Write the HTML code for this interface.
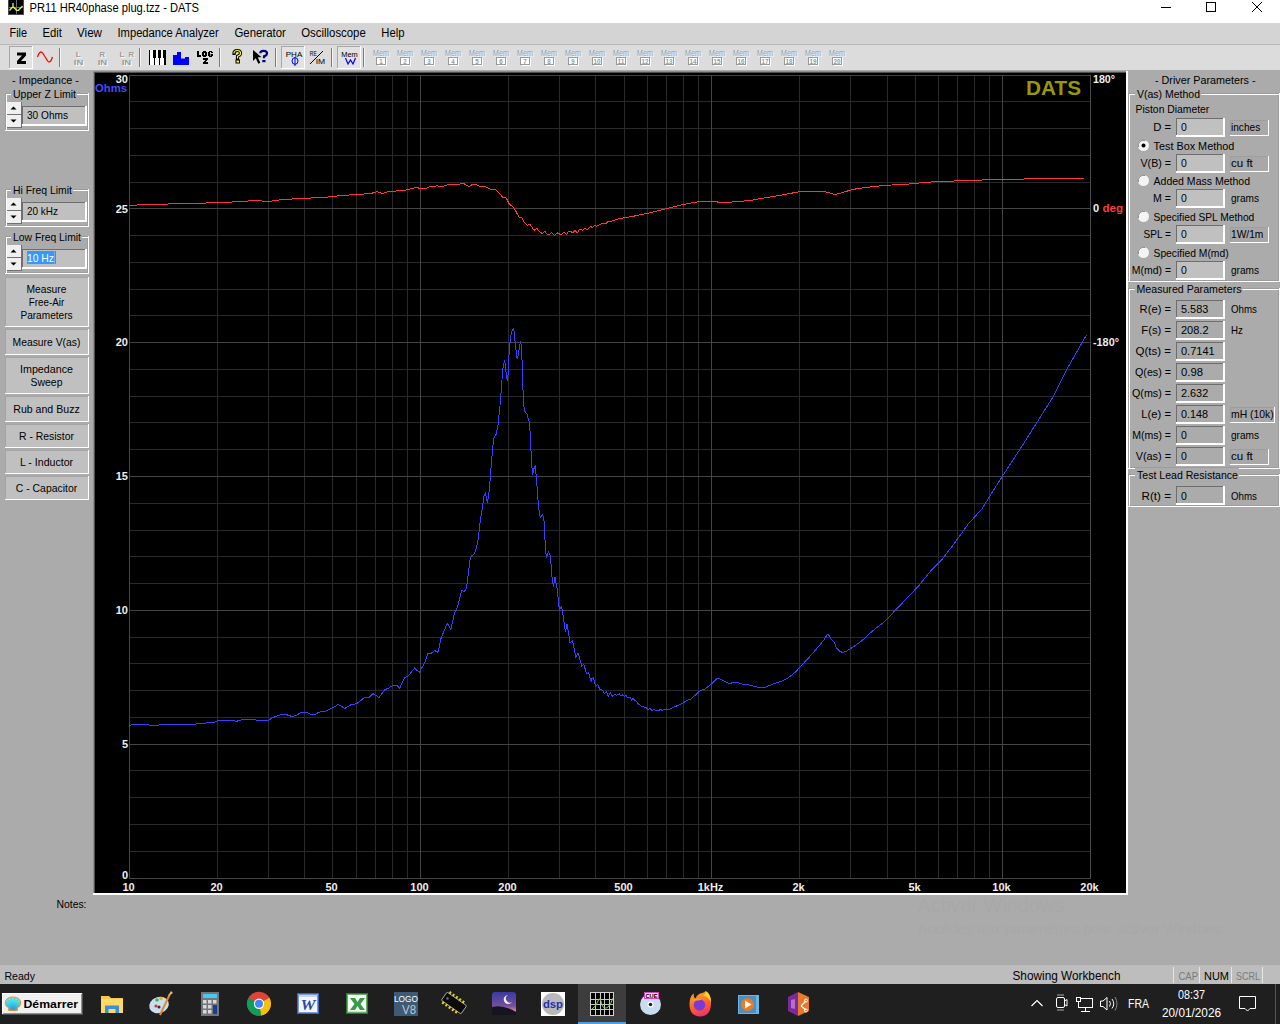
<!DOCTYPE html>
<html><head><meta charset="utf-8"><title>DATS</title>
<style>
html,body{margin:0;padding:0;width:1280px;height:1024px;overflow:hidden;background:#ababab;}
svg{display:block;font-family:"Liberation Sans",sans-serif;}
</style></head><body>
<svg width="1280" height="1024" viewBox="0 0 1280 1024">
<rect x="0" y="0" width="1280" height="1024" fill="#ababab" />
<rect x="0" y="0" width="1280" height="23" fill="#ffffff" />
<rect x="8" y="0" width="16" height="15" fill="#4a4a4a" />
<rect x="9" y="0" width="14" height="14" fill="#000" />
<rect x="16" y="0" width="1" height="14" fill="#707070" />
<rect x="9" y="7" width="14" height="1" fill="#6a6a6a" />
<path d="M9.5 10.5 L12 7.5 L13 7.5 L13 3 M13 7.5 L14 7.5 L16.5 10.3 L18.5 10.3 L22.5 6" stroke="#e0f040" stroke-width="1.3" fill="none"/>
<text x="29.5" y="12" font-size="12" fill="#000" text-anchor="start" textLength="169.5" lengthAdjust="spacingAndGlyphs" >PR11 HR40phase plug.tzz - DATS</text>
<rect x="1161" y="7" width="10" height="1" fill="#000" />
<rect x="1206.5" y="2.5" width="9" height="9" fill="none" stroke="#000" stroke-width="1"/>
<path d="M1252 2 L1262 12 M1262 2 L1252 12" stroke="#000" stroke-width="1"/>
<rect x="0" y="23" width="1280" height="21" fill="#d4d4d4" />
<text x="9.5" y="37" font-size="12" fill="#000" text-anchor="start" textLength="17.5" lengthAdjust="spacingAndGlyphs" >File</text>
<text x="42.5" y="37" font-size="12" fill="#000" text-anchor="start" textLength="19.5" lengthAdjust="spacingAndGlyphs" >Edit</text>
<text x="77" y="37" font-size="12" fill="#000" text-anchor="start" textLength="25" lengthAdjust="spacingAndGlyphs" >View</text>
<text x="117.5" y="37" font-size="12" fill="#000" text-anchor="start" textLength="101.25" lengthAdjust="spacingAndGlyphs" >Impedance Analyzer</text>
<text x="234.5" y="37" font-size="12" fill="#000" text-anchor="start" textLength="51.25" lengthAdjust="spacingAndGlyphs" >Generator</text>
<text x="301.25" y="37" font-size="12" fill="#000" text-anchor="start" textLength="64.5" lengthAdjust="spacingAndGlyphs" >Oscilloscope</text>
<text x="381.25" y="37" font-size="12" fill="#000" text-anchor="start" textLength="23.25" lengthAdjust="spacingAndGlyphs" >Help</text>
<rect x="0" y="44" width="1280" height="1" fill="#b8b8b8" />
<rect x="0" y="45" width="1280" height="25" fill="#dcdcdc" />
<rect x="9" y="46" width="24" height="23" fill="#ffffff" />
<rect x="9" y="46" width="23" height="22" fill="#a8a8a8" />
<rect x="10" y="47" width="22" height="21" fill="#e2e2e2" />
<path d="M17 52.5 H26 V55.5 L21 61 H26 V64 H17 V61 L22 55.5 H17Z" fill="#000"/>
<path d="M37.5 57 C39 52, 41 50.5, 43 53.5 L47 60 C49 63.5, 51 62, 52.5 57" stroke="#ff0000" stroke-width="1.3" fill="none"/>
<rect x="59" y="48" width="1" height="19" fill="#7a7a7a" />
<rect x="60" y="48" width="1" height="19" fill="#f4f4f4" />
<text x="79.2" y="58" font-size="8" fill="#ffffff" font-weight="bold" text-anchor="middle" textLength="5" lengthAdjust="spacingAndGlyphs" >L</text>
<text x="78.2" y="57" font-size="8" fill="#9a9a9a" font-weight="bold" text-anchor="middle" textLength="5" lengthAdjust="spacingAndGlyphs" >L</text>
<text x="79.5" y="66" font-size="8" fill="#ffffff" font-weight="bold" text-anchor="middle" textLength="9.5" lengthAdjust="spacingAndGlyphs" >IN</text>
<text x="78.5" y="65" font-size="8" fill="#9a9a9a" font-weight="bold" text-anchor="middle" textLength="9.5" lengthAdjust="spacingAndGlyphs" >IN</text>
<text x="103.3" y="58" font-size="8" fill="#ffffff" font-weight="bold" text-anchor="middle" textLength="5.5" lengthAdjust="spacingAndGlyphs" >R</text>
<text x="102.3" y="57" font-size="8" fill="#9a9a9a" font-weight="bold" text-anchor="middle" textLength="5.5" lengthAdjust="spacingAndGlyphs" >R</text>
<text x="103.4" y="66" font-size="8" fill="#ffffff" font-weight="bold" text-anchor="middle" textLength="9.5" lengthAdjust="spacingAndGlyphs" >IN</text>
<text x="102.4" y="65" font-size="8" fill="#9a9a9a" font-weight="bold" text-anchor="middle" textLength="9.5" lengthAdjust="spacingAndGlyphs" >IN</text>
<text x="123" y="58" font-size="8" fill="#ffffff" font-weight="bold" text-anchor="middle" textLength="5" lengthAdjust="spacingAndGlyphs" >L</text>
<text x="122" y="57" font-size="8" fill="#9a9a9a" font-weight="bold" text-anchor="middle" textLength="5" lengthAdjust="spacingAndGlyphs" >L</text>
<text x="132.2" y="58" font-size="8" fill="#ffffff" font-weight="bold" text-anchor="middle" textLength="5.5" lengthAdjust="spacingAndGlyphs" >R</text>
<text x="131.2" y="57" font-size="8" fill="#9a9a9a" font-weight="bold" text-anchor="middle" textLength="5.5" lengthAdjust="spacingAndGlyphs" >R</text>
<text x="127.4" y="66" font-size="8" fill="#ffffff" font-weight="bold" text-anchor="middle" textLength="9.5" lengthAdjust="spacingAndGlyphs" >IN</text>
<text x="126.4" y="65" font-size="8" fill="#9a9a9a" font-weight="bold" text-anchor="middle" textLength="9.5" lengthAdjust="spacingAndGlyphs" >IN</text>
<rect x="139" y="48" width="1" height="19" fill="#7a7a7a" />
<rect x="140" y="48" width="1" height="19" fill="#f4f4f4" />
<rect x="149" y="50" width="17" height="15" fill="#ffffff" />
<rect x="149" y="50" width="1" height="15" fill="#000" />
<rect x="153" y="50" width="3" height="8" fill="#000" />
<rect x="154" y="58" width="1" height="7" fill="#000" />
<rect x="158" y="50" width="3" height="8" fill="#000" />
<rect x="159" y="58" width="1" height="7" fill="#000" />
<rect x="163" y="50" width="3" height="8" fill="#000" />
<rect x="164" y="58" width="1" height="7" fill="#000" />
<rect x="165" y="50" width="1" height="15" fill="#000" />
<path d="M173 55 H177 V52 H181 V58.5 H185 V57 H189 V65 H173Z" fill="#0000ff"/>
<rect x="197" y="51" width="2" height="6" fill="#000" />
<rect x="197" y="55" width="4" height="2" fill="#000" />
<rect x="203" y="51" width="3" height="6" fill="#000" />
<rect x="202" y="52" width="5" height="4" fill="#000" />
<rect x="204" y="53" width="1" height="2" fill="#dcdcdc" />
<rect x="209" y="51" width="3" height="1" fill="#000" />
<rect x="208" y="52" width="2" height="4" fill="#000" />
<rect x="209" y="56" width="3" height="1" fill="#000" />
<rect x="211" y="52" width="2" height="1" fill="#000" />
<rect x="210.5" y="54" width="2.5" height="2" fill="#000" />
<rect x="203" y="58" width="5" height="2" fill="#000" />
<rect x="205" y="60" width="2" height="1" fill="#000" />
<rect x="204" y="61" width="2" height="1" fill="#000" />
<rect x="203" y="62" width="5" height="2" fill="#000" />
<rect x="219" y="48" width="1" height="19" fill="#7a7a7a" />
<rect x="220" y="48" width="1" height="19" fill="#f4f4f4" />
<path d="M234 53.5 Q234 50.5 237.2 50.5 Q240.5 50.5 240.5 53.2 Q240.5 55.3 237.5 56.3 V58.5" stroke="#000" stroke-width="3.2" fill="none" stroke-linecap="square"/>
<rect x="235.5" y="59.5" width="4.5" height="4" fill="#000" />
<path d="M234 53.5 Q234 50.5 237.2 50.5 Q240.5 50.5 240.5 53.2 Q240.5 55.3 237.5 56.3 V58.5" stroke="#ffff00" stroke-width="1.2" fill="none"/>
<rect x="236.5" y="60.5" width="2.5" height="2" fill="#ffff00" />
<path d="M253 50 L253 61 L255.8 58.3 L258.3 63.8 L260.3 62.8 L257.8 57.3 L261.5 57.3 Z" fill="#000"/>
<path d="M260.3 53.2 Q260.3 50.8 263.5 50.8 Q267 50.8 267 53.2 Q267 55.3 264 56.3 V58.2" stroke="#000080" stroke-width="2.2" fill="none"/>
<rect x="262.3" y="60" width="3.2" height="2.2" fill="#000080" />
<rect x="275" y="48" width="1" height="19" fill="#7a7a7a" />
<rect x="276" y="48" width="1" height="19" fill="#f4f4f4" />
<rect x="281" y="46" width="24" height="23" fill="#ffffff" />
<rect x="281" y="46" width="23" height="22" fill="#a8a8a8" />
<rect x="282" y="47" width="22" height="21" fill="#e2e2e2" />
<text x="294" y="56.5" font-size="8" fill="#000" text-anchor="middle" textLength="16.5" lengthAdjust="spacingAndGlyphs" >PHA</text>
<ellipse cx="295" cy="61" rx="3" ry="3.3" fill="none" stroke="#0000ff" stroke-width="1"/>
<rect x="294.5" y="57" width="1" height="9" fill="#0000ff" />
<text x="313.3" y="56.3" font-size="7.5" fill="#000" text-anchor="middle" textLength="7" lengthAdjust="spacingAndGlyphs" >RE</text>
<text x="320.5" y="63.5" font-size="7.5" fill="#000" text-anchor="middle" textLength="9.5" lengthAdjust="spacingAndGlyphs" >IM</text>
<path d="M310 64 L323 51" stroke="#000" stroke-width="1"/>
<rect x="331" y="48" width="1" height="19" fill="#7a7a7a" />
<rect x="332" y="48" width="1" height="19" fill="#f4f4f4" />
<rect x="337" y="46" width="24" height="23" fill="#ffffff" />
<rect x="337" y="46" width="23" height="22" fill="#a8a8a8" />
<rect x="338" y="47" width="22" height="21" fill="#e2e2e2" />
<text x="349.5" y="56.5" font-size="8" fill="#000" text-anchor="middle" textLength="16.5" lengthAdjust="spacingAndGlyphs" >Mem</text>
<path d="M345.5 58 L348 64 L350.5 60 L353 64 L355.5 58" stroke="#0000ff" stroke-width="1.2" fill="none"/>
<rect x="363" y="48" width="1" height="19" fill="#7a7a7a" />
<rect x="364" y="48" width="1" height="19" fill="#f4f4f4" />
<text x="382" y="57" font-size="8.5" fill="#ffffff" text-anchor="middle" textLength="16" lengthAdjust="spacingAndGlyphs" >Mem</text>
<text x="381" y="56" font-size="8.5" fill="#999999" text-anchor="middle" textLength="16" lengthAdjust="spacingAndGlyphs" >Mem</text>
<rect x="386" y="58" width="1" height="8" fill="#ffffff" />
<rect x="378" y="65" width="9" height="1" fill="#ffffff" />
<rect x="376.5" y="57.5" width="9" height="7" fill="#ffffff" stroke="#9a9a9a" stroke-width="1"/>
<text x="381" y="63.6" font-size="6.5" fill="#9a9a9a" font-weight="bold" text-anchor="middle" textLength="3.5" lengthAdjust="spacingAndGlyphs" >1</text>
<text x="406" y="57" font-size="8.5" fill="#ffffff" text-anchor="middle" textLength="16" lengthAdjust="spacingAndGlyphs" >Mem</text>
<text x="405" y="56" font-size="8.5" fill="#999999" text-anchor="middle" textLength="16" lengthAdjust="spacingAndGlyphs" >Mem</text>
<rect x="410" y="58" width="1" height="8" fill="#ffffff" />
<rect x="402" y="65" width="9" height="1" fill="#ffffff" />
<rect x="400.5" y="57.5" width="9" height="7" fill="#ffffff" stroke="#9a9a9a" stroke-width="1"/>
<text x="405" y="63.6" font-size="6.5" fill="#9a9a9a" font-weight="bold" text-anchor="middle" textLength="3.5" lengthAdjust="spacingAndGlyphs" >2</text>
<text x="430" y="57" font-size="8.5" fill="#ffffff" text-anchor="middle" textLength="16" lengthAdjust="spacingAndGlyphs" >Mem</text>
<text x="429" y="56" font-size="8.5" fill="#999999" text-anchor="middle" textLength="16" lengthAdjust="spacingAndGlyphs" >Mem</text>
<rect x="434" y="58" width="1" height="8" fill="#ffffff" />
<rect x="426" y="65" width="9" height="1" fill="#ffffff" />
<rect x="424.5" y="57.5" width="9" height="7" fill="#ffffff" stroke="#9a9a9a" stroke-width="1"/>
<text x="429" y="63.6" font-size="6.5" fill="#9a9a9a" font-weight="bold" text-anchor="middle" textLength="3.5" lengthAdjust="spacingAndGlyphs" >3</text>
<text x="454" y="57" font-size="8.5" fill="#ffffff" text-anchor="middle" textLength="16" lengthAdjust="spacingAndGlyphs" >Mem</text>
<text x="453" y="56" font-size="8.5" fill="#999999" text-anchor="middle" textLength="16" lengthAdjust="spacingAndGlyphs" >Mem</text>
<rect x="458" y="58" width="1" height="8" fill="#ffffff" />
<rect x="450" y="65" width="9" height="1" fill="#ffffff" />
<rect x="448.5" y="57.5" width="9" height="7" fill="#ffffff" stroke="#9a9a9a" stroke-width="1"/>
<text x="453" y="63.6" font-size="6.5" fill="#9a9a9a" font-weight="bold" text-anchor="middle" textLength="3.5" lengthAdjust="spacingAndGlyphs" >4</text>
<text x="478" y="57" font-size="8.5" fill="#ffffff" text-anchor="middle" textLength="16" lengthAdjust="spacingAndGlyphs" >Mem</text>
<text x="477" y="56" font-size="8.5" fill="#999999" text-anchor="middle" textLength="16" lengthAdjust="spacingAndGlyphs" >Mem</text>
<rect x="482" y="58" width="1" height="8" fill="#ffffff" />
<rect x="474" y="65" width="9" height="1" fill="#ffffff" />
<rect x="472.5" y="57.5" width="9" height="7" fill="#ffffff" stroke="#9a9a9a" stroke-width="1"/>
<text x="477" y="63.6" font-size="6.5" fill="#9a9a9a" font-weight="bold" text-anchor="middle" textLength="3.5" lengthAdjust="spacingAndGlyphs" >5</text>
<text x="502" y="57" font-size="8.5" fill="#ffffff" text-anchor="middle" textLength="16" lengthAdjust="spacingAndGlyphs" >Mem</text>
<text x="501" y="56" font-size="8.5" fill="#999999" text-anchor="middle" textLength="16" lengthAdjust="spacingAndGlyphs" >Mem</text>
<rect x="506" y="58" width="1" height="8" fill="#ffffff" />
<rect x="498" y="65" width="9" height="1" fill="#ffffff" />
<rect x="496.5" y="57.5" width="9" height="7" fill="#ffffff" stroke="#9a9a9a" stroke-width="1"/>
<text x="501" y="63.6" font-size="6.5" fill="#9a9a9a" font-weight="bold" text-anchor="middle" textLength="3.5" lengthAdjust="spacingAndGlyphs" >6</text>
<text x="526" y="57" font-size="8.5" fill="#ffffff" text-anchor="middle" textLength="16" lengthAdjust="spacingAndGlyphs" >Mem</text>
<text x="525" y="56" font-size="8.5" fill="#999999" text-anchor="middle" textLength="16" lengthAdjust="spacingAndGlyphs" >Mem</text>
<rect x="530" y="58" width="1" height="8" fill="#ffffff" />
<rect x="522" y="65" width="9" height="1" fill="#ffffff" />
<rect x="520.5" y="57.5" width="9" height="7" fill="#ffffff" stroke="#9a9a9a" stroke-width="1"/>
<text x="525" y="63.6" font-size="6.5" fill="#9a9a9a" font-weight="bold" text-anchor="middle" textLength="3.5" lengthAdjust="spacingAndGlyphs" >7</text>
<text x="550" y="57" font-size="8.5" fill="#ffffff" text-anchor="middle" textLength="16" lengthAdjust="spacingAndGlyphs" >Mem</text>
<text x="549" y="56" font-size="8.5" fill="#999999" text-anchor="middle" textLength="16" lengthAdjust="spacingAndGlyphs" >Mem</text>
<rect x="554" y="58" width="1" height="8" fill="#ffffff" />
<rect x="546" y="65" width="9" height="1" fill="#ffffff" />
<rect x="544.5" y="57.5" width="9" height="7" fill="#ffffff" stroke="#9a9a9a" stroke-width="1"/>
<text x="549" y="63.6" font-size="6.5" fill="#9a9a9a" font-weight="bold" text-anchor="middle" textLength="3.5" lengthAdjust="spacingAndGlyphs" >8</text>
<text x="574" y="57" font-size="8.5" fill="#ffffff" text-anchor="middle" textLength="16" lengthAdjust="spacingAndGlyphs" >Mem</text>
<text x="573" y="56" font-size="8.5" fill="#999999" text-anchor="middle" textLength="16" lengthAdjust="spacingAndGlyphs" >Mem</text>
<rect x="578" y="58" width="1" height="8" fill="#ffffff" />
<rect x="570" y="65" width="9" height="1" fill="#ffffff" />
<rect x="568.5" y="57.5" width="9" height="7" fill="#ffffff" stroke="#9a9a9a" stroke-width="1"/>
<text x="573" y="63.6" font-size="6.5" fill="#9a9a9a" font-weight="bold" text-anchor="middle" textLength="3.5" lengthAdjust="spacingAndGlyphs" >9</text>
<text x="598" y="57" font-size="8.5" fill="#ffffff" text-anchor="middle" textLength="16" lengthAdjust="spacingAndGlyphs" >Mem</text>
<text x="597" y="56" font-size="8.5" fill="#999999" text-anchor="middle" textLength="16" lengthAdjust="spacingAndGlyphs" >Mem</text>
<rect x="602" y="58" width="1" height="8" fill="#ffffff" />
<rect x="594" y="65" width="9" height="1" fill="#ffffff" />
<rect x="592.5" y="57.5" width="9" height="7" fill="#ffffff" stroke="#9a9a9a" stroke-width="1"/>
<text x="597" y="63.6" font-size="6.5" fill="#9a9a9a" font-weight="bold" text-anchor="middle" textLength="7" lengthAdjust="spacingAndGlyphs" >10</text>
<text x="622" y="57" font-size="8.5" fill="#ffffff" text-anchor="middle" textLength="16" lengthAdjust="spacingAndGlyphs" >Mem</text>
<text x="621" y="56" font-size="8.5" fill="#999999" text-anchor="middle" textLength="16" lengthAdjust="spacingAndGlyphs" >Mem</text>
<rect x="626" y="58" width="1" height="8" fill="#ffffff" />
<rect x="618" y="65" width="9" height="1" fill="#ffffff" />
<rect x="616.5" y="57.5" width="9" height="7" fill="#ffffff" stroke="#9a9a9a" stroke-width="1"/>
<text x="621" y="63.6" font-size="6.5" fill="#9a9a9a" font-weight="bold" text-anchor="middle" textLength="7" lengthAdjust="spacingAndGlyphs" >11</text>
<text x="646" y="57" font-size="8.5" fill="#ffffff" text-anchor="middle" textLength="16" lengthAdjust="spacingAndGlyphs" >Mem</text>
<text x="645" y="56" font-size="8.5" fill="#999999" text-anchor="middle" textLength="16" lengthAdjust="spacingAndGlyphs" >Mem</text>
<rect x="650" y="58" width="1" height="8" fill="#ffffff" />
<rect x="642" y="65" width="9" height="1" fill="#ffffff" />
<rect x="640.5" y="57.5" width="9" height="7" fill="#ffffff" stroke="#9a9a9a" stroke-width="1"/>
<text x="645" y="63.6" font-size="6.5" fill="#9a9a9a" font-weight="bold" text-anchor="middle" textLength="7" lengthAdjust="spacingAndGlyphs" >12</text>
<text x="670" y="57" font-size="8.5" fill="#ffffff" text-anchor="middle" textLength="16" lengthAdjust="spacingAndGlyphs" >Mem</text>
<text x="669" y="56" font-size="8.5" fill="#999999" text-anchor="middle" textLength="16" lengthAdjust="spacingAndGlyphs" >Mem</text>
<rect x="674" y="58" width="1" height="8" fill="#ffffff" />
<rect x="666" y="65" width="9" height="1" fill="#ffffff" />
<rect x="664.5" y="57.5" width="9" height="7" fill="#ffffff" stroke="#9a9a9a" stroke-width="1"/>
<text x="669" y="63.6" font-size="6.5" fill="#9a9a9a" font-weight="bold" text-anchor="middle" textLength="7" lengthAdjust="spacingAndGlyphs" >13</text>
<text x="694" y="57" font-size="8.5" fill="#ffffff" text-anchor="middle" textLength="16" lengthAdjust="spacingAndGlyphs" >Mem</text>
<text x="693" y="56" font-size="8.5" fill="#999999" text-anchor="middle" textLength="16" lengthAdjust="spacingAndGlyphs" >Mem</text>
<rect x="698" y="58" width="1" height="8" fill="#ffffff" />
<rect x="690" y="65" width="9" height="1" fill="#ffffff" />
<rect x="688.5" y="57.5" width="9" height="7" fill="#ffffff" stroke="#9a9a9a" stroke-width="1"/>
<text x="693" y="63.6" font-size="6.5" fill="#9a9a9a" font-weight="bold" text-anchor="middle" textLength="7" lengthAdjust="spacingAndGlyphs" >14</text>
<text x="718" y="57" font-size="8.5" fill="#ffffff" text-anchor="middle" textLength="16" lengthAdjust="spacingAndGlyphs" >Mem</text>
<text x="717" y="56" font-size="8.5" fill="#999999" text-anchor="middle" textLength="16" lengthAdjust="spacingAndGlyphs" >Mem</text>
<rect x="722" y="58" width="1" height="8" fill="#ffffff" />
<rect x="714" y="65" width="9" height="1" fill="#ffffff" />
<rect x="712.5" y="57.5" width="9" height="7" fill="#ffffff" stroke="#9a9a9a" stroke-width="1"/>
<text x="717" y="63.6" font-size="6.5" fill="#9a9a9a" font-weight="bold" text-anchor="middle" textLength="7" lengthAdjust="spacingAndGlyphs" >15</text>
<text x="742" y="57" font-size="8.5" fill="#ffffff" text-anchor="middle" textLength="16" lengthAdjust="spacingAndGlyphs" >Mem</text>
<text x="741" y="56" font-size="8.5" fill="#999999" text-anchor="middle" textLength="16" lengthAdjust="spacingAndGlyphs" >Mem</text>
<rect x="746" y="58" width="1" height="8" fill="#ffffff" />
<rect x="738" y="65" width="9" height="1" fill="#ffffff" />
<rect x="736.5" y="57.5" width="9" height="7" fill="#ffffff" stroke="#9a9a9a" stroke-width="1"/>
<text x="741" y="63.6" font-size="6.5" fill="#9a9a9a" font-weight="bold" text-anchor="middle" textLength="7" lengthAdjust="spacingAndGlyphs" >16</text>
<text x="766" y="57" font-size="8.5" fill="#ffffff" text-anchor="middle" textLength="16" lengthAdjust="spacingAndGlyphs" >Mem</text>
<text x="765" y="56" font-size="8.5" fill="#999999" text-anchor="middle" textLength="16" lengthAdjust="spacingAndGlyphs" >Mem</text>
<rect x="770" y="58" width="1" height="8" fill="#ffffff" />
<rect x="762" y="65" width="9" height="1" fill="#ffffff" />
<rect x="760.5" y="57.5" width="9" height="7" fill="#ffffff" stroke="#9a9a9a" stroke-width="1"/>
<text x="765" y="63.6" font-size="6.5" fill="#9a9a9a" font-weight="bold" text-anchor="middle" textLength="7" lengthAdjust="spacingAndGlyphs" >17</text>
<text x="790" y="57" font-size="8.5" fill="#ffffff" text-anchor="middle" textLength="16" lengthAdjust="spacingAndGlyphs" >Mem</text>
<text x="789" y="56" font-size="8.5" fill="#999999" text-anchor="middle" textLength="16" lengthAdjust="spacingAndGlyphs" >Mem</text>
<rect x="794" y="58" width="1" height="8" fill="#ffffff" />
<rect x="786" y="65" width="9" height="1" fill="#ffffff" />
<rect x="784.5" y="57.5" width="9" height="7" fill="#ffffff" stroke="#9a9a9a" stroke-width="1"/>
<text x="789" y="63.6" font-size="6.5" fill="#9a9a9a" font-weight="bold" text-anchor="middle" textLength="7" lengthAdjust="spacingAndGlyphs" >18</text>
<text x="814" y="57" font-size="8.5" fill="#ffffff" text-anchor="middle" textLength="16" lengthAdjust="spacingAndGlyphs" >Mem</text>
<text x="813" y="56" font-size="8.5" fill="#999999" text-anchor="middle" textLength="16" lengthAdjust="spacingAndGlyphs" >Mem</text>
<rect x="818" y="58" width="1" height="8" fill="#ffffff" />
<rect x="810" y="65" width="9" height="1" fill="#ffffff" />
<rect x="808.5" y="57.5" width="9" height="7" fill="#ffffff" stroke="#9a9a9a" stroke-width="1"/>
<text x="813" y="63.6" font-size="6.5" fill="#9a9a9a" font-weight="bold" text-anchor="middle" textLength="7" lengthAdjust="spacingAndGlyphs" >19</text>
<text x="838" y="57" font-size="8.5" fill="#ffffff" text-anchor="middle" textLength="16" lengthAdjust="spacingAndGlyphs" >Mem</text>
<text x="837" y="56" font-size="8.5" fill="#999999" text-anchor="middle" textLength="16" lengthAdjust="spacingAndGlyphs" >Mem</text>
<rect x="842" y="58" width="1" height="8" fill="#ffffff" />
<rect x="834" y="65" width="9" height="1" fill="#ffffff" />
<rect x="832.5" y="57.5" width="9" height="7" fill="#ffffff" stroke="#9a9a9a" stroke-width="1"/>
<text x="837" y="63.6" font-size="6.5" fill="#9a9a9a" font-weight="bold" text-anchor="middle" textLength="7" lengthAdjust="spacingAndGlyphs" >20</text>
<rect x="93" y="71" width="1035" height="824" fill="#ffffff" />
<rect x="93" y="71" width="1033" height="822" fill="#8e8e8e" />
<rect x="94" y="72" width="1032" height="821" fill="#505050" />
<rect x="95" y="73" width="1031" height="820" fill="#000" />
<rect x="217" y="75" width="1" height="804" fill="#2a2a2a"/>
<rect x="268" y="75" width="1" height="804" fill="#2a2a2a"/>
<rect x="304" y="75" width="1" height="804" fill="#2a2a2a"/>
<rect x="332" y="75" width="1" height="804" fill="#2a2a2a"/>
<rect x="356" y="75" width="1" height="804" fill="#2a2a2a"/>
<rect x="375" y="75" width="1" height="804" fill="#2a2a2a"/>
<rect x="392" y="75" width="1" height="804" fill="#2a2a2a"/>
<rect x="407" y="75" width="1" height="804" fill="#2a2a2a"/>
<rect x="508" y="75" width="1" height="804" fill="#2a2a2a"/>
<rect x="559" y="75" width="1" height="804" fill="#2a2a2a"/>
<rect x="595" y="75" width="1" height="804" fill="#2a2a2a"/>
<rect x="624" y="75" width="1" height="804" fill="#2a2a2a"/>
<rect x="647" y="75" width="1" height="804" fill="#2a2a2a"/>
<rect x="666" y="75" width="1" height="804" fill="#2a2a2a"/>
<rect x="683" y="75" width="1" height="804" fill="#2a2a2a"/>
<rect x="698" y="75" width="1" height="804" fill="#2a2a2a"/>
<rect x="799" y="75" width="1" height="804" fill="#2a2a2a"/>
<rect x="850" y="75" width="1" height="804" fill="#2a2a2a"/>
<rect x="887" y="75" width="1" height="804" fill="#2a2a2a"/>
<rect x="915" y="75" width="1" height="804" fill="#2a2a2a"/>
<rect x="938" y="75" width="1" height="804" fill="#2a2a2a"/>
<rect x="957" y="75" width="1" height="804" fill="#2a2a2a"/>
<rect x="974" y="75" width="1" height="804" fill="#2a2a2a"/>
<rect x="989" y="75" width="1" height="804" fill="#2a2a2a"/>
<rect x="129" y="851" width="962" height="1" fill="#2a2a2a"/>
<rect x="129" y="824" width="962" height="1" fill="#2a2a2a"/>
<rect x="129" y="797" width="962" height="1" fill="#2a2a2a"/>
<rect x="129" y="770" width="962" height="1" fill="#2a2a2a"/>
<rect x="129" y="717" width="962" height="1" fill="#2a2a2a"/>
<rect x="129" y="690" width="962" height="1" fill="#2a2a2a"/>
<rect x="129" y="663" width="962" height="1" fill="#2a2a2a"/>
<rect x="129" y="637" width="962" height="1" fill="#2a2a2a"/>
<rect x="129" y="583" width="962" height="1" fill="#2a2a2a"/>
<rect x="129" y="556" width="962" height="1" fill="#2a2a2a"/>
<rect x="129" y="530" width="962" height="1" fill="#2a2a2a"/>
<rect x="129" y="503" width="962" height="1" fill="#2a2a2a"/>
<rect x="129" y="449" width="962" height="1" fill="#2a2a2a"/>
<rect x="129" y="422" width="962" height="1" fill="#2a2a2a"/>
<rect x="129" y="396" width="962" height="1" fill="#2a2a2a"/>
<rect x="129" y="369" width="962" height="1" fill="#2a2a2a"/>
<rect x="129" y="315" width="962" height="1" fill="#2a2a2a"/>
<rect x="129" y="289" width="962" height="1" fill="#2a2a2a"/>
<rect x="129" y="262" width="962" height="1" fill="#2a2a2a"/>
<rect x="129" y="235" width="962" height="1" fill="#2a2a2a"/>
<rect x="129" y="182" width="962" height="1" fill="#2a2a2a"/>
<rect x="129" y="155" width="962" height="1" fill="#2a2a2a"/>
<rect x="129" y="128" width="962" height="1" fill="#2a2a2a"/>
<rect x="129" y="101" width="962" height="1" fill="#2a2a2a"/>
<rect x="129" y="75" width="1" height="804" fill="#444444"/>
<rect x="420" y="75" width="1" height="804" fill="#444444"/>
<rect x="711" y="75" width="1" height="804" fill="#444444"/>
<rect x="1002" y="75" width="1" height="804" fill="#444444"/>
<rect x="1090" y="75" width="1" height="804" fill="#4a4a4a"/>
<rect x="1090" y="75" width="1" height="804" fill="#4a4a4a"/>
<rect x="129" y="878" width="962" height="1" fill="#444444"/>
<rect x="129" y="744" width="962" height="1" fill="#444444"/>
<rect x="129" y="610" width="962" height="1" fill="#444444"/>
<rect x="129" y="476" width="962" height="1" fill="#444444"/>
<rect x="129" y="342" width="962" height="1" fill="#444444"/>
<rect x="129" y="208" width="962" height="1" fill="#444444"/>
<rect x="129" y="75" width="962" height="1" fill="#444444"/>
<path d="M129.0 205.3 L155.0 204.3 L190.0 203.5 L223.0 202.5 L242.0 201.5 L255.0 200.5 L268.0 201.5 L276.0 200.5 L283.0 199.5 L301.0 198.5 L322.0 197.5 L335.0 196.5 L340.0 195.5 L360.0 194.4 L371.3 193.4 L376.9 191.6 L382.5 193.4 L388.1 191.6 L405.0 190.3 L408.8 189.3 L416.3 187.4 L420.0 188.4 L426.6 188.4 L430.3 186.5 L436.9 185.9 L442.5 186.5 L449.1 184.4 L457.5 185.0 L463.1 183.1 L468.8 186.5 L472.5 184.4 L476.3 184.4 L480.0 186.5 L485.6 186.9 L491.3 189.7 L495.0 189.3 L498.8 192.5 L502.5 197.2 L506.3 198.1 L509.1 203.8 L513.8 207.5 L519.4 217.8 L520.0 218.2 L521.6 217.4 L523.5 221.3 L527.4 225.2 L530.2 224.5 L534.1 230.3 L536.8 228.4 L540.3 232.3 L542.3 233.4 L544.8 231.3 L547.3 234.4 L549.5 234.4 L551.4 232.5 L554.4 235.4 L557.9 232.7 L559.8 234.4 L561.4 234.4 L564.1 232.3 L566.5 234.6 L568.4 231.5 L570.8 231.5 L572.3 233.0 L575.1 230.5 L577.4 232.7 L579.4 229.4 L581.7 229.5 L582.5 230.7 L584.8 228.4 L587.2 229.5 L590.7 226.4 L592.3 227.6 L595.0 225.2 L596.6 226.4 L599.7 224.5 L602.8 223.4 L605.9 223.4 L607.9 221.6 L611.0 221.6 L613.0 220.5 L615.3 219.8 L619.2 218.6 L630.0 216.9 L646.9 213.5 L667.5 208.4 L682.5 204.7 L693.8 202.4 L702.2 201.3 L716.3 201.3 L718.1 202.4 L731.3 202.4 L733.1 201.3 L748.1 200.9 L755.6 199.4 L768.8 197.2 L780.0 195.3 L793.1 192.9 L800.6 191.6 L818.4 191.2 L825.0 191.6 L834.4 194.4 L840.0 193.4 L852.2 189.5 L866.4 187.4 L884.7 185.4 L909.1 184.0 L925.3 182.3 L945.6 181.3 L974.1 180.3 L1000.5 179.3 L1049.2 178.7 L1083.8 178.3" stroke="#ff3535" stroke-width="1" fill="none" shape-rendering="crispEdges"/>
<path d="M129.4 725.6 L132.0 724.4 L148.4 724.4 L150.0 725.5 L158.6 725.5 L159.4 724.4 L195.3 724.4 L196.9 723.3 L205.5 723.3 L207.0 722.0 L214.8 722.0 L217.2 720.9 L219.5 720.5 L233.6 720.5 L235.9 721.6 L239.0 720.5 L244.5 719.4 L255.5 719.4 L257.0 720.5 L268.0 720.5 L271.9 718.1 L277.3 715.8 L281.3 714.5 L286.0 714.5 L292.2 716.6 L296.9 715.3 L300.8 712.3 L306.3 712.3 L311.0 714.5 L314.8 714.5 L318.8 712.2 L326.0 711.0 L334.0 707.2 L338.0 704.5 L345.0 708.4 L351.3 704.5 L356.7 703.8 L364.5 697.5 L369.2 697.2 L373.0 693.6 L379.0 697.5 L384.8 689.7 L388.8 688.1 L392.7 685.3 L396.6 685.3 L399.7 688.1 L404.4 678.0 L408.3 676.0 L414.5 668.1 L419.2 672.2 L424.7 663.1 L427.8 653.4 L431.0 653.4 L434.8 650.6 L438.0 652.2 L441.1 638.1 L447.3 623.3 L450.9 629.5 L454.4 613.1 L457.5 606.9 L461.9 590.0 L464.1 591.8 L466.5 588.1 L468.3 573.3 L470.2 558.4 L471.5 555.6 L473.9 554.7 L476.7 547.3 L478.6 536.2 L480.4 519.5 L482.3 508.3 L484.1 495.3 L485.4 493.5 L487.5 502.8 L488.8 494.4 L490.2 478.6 L491.5 462.0 L492.8 447.1 L494.0 437.8 L496.2 434.1 L498.0 424.8 L498.6 418.6 L499.5 411.3 L500.5 400.1 L501.5 386.4 L502.5 373.2 L503.4 364.4 L504.4 361.5 L505.4 364.4 L505.6 371.8 L506.4 372.7 L506.9 378.6 L507.8 381.0 L508.5 362.5 L509.5 347.3 L510.5 338.1 L511.4 333.2 L512.4 329.8 L513.4 328.8 L514.4 332.2 L514.7 340.5 L515.6 342.0 L516.1 352.2 L517.3 359.1 L518.6 353.2 L519.6 345.9 L520.5 341.5 L521.5 347.3 L522.2 364.9 L523.0 389.8 L523.7 405.9 L524.9 411.3 L526.8 413.7 L529.6 423.0 L530.9 449.0 L532.0 467.5 L532.7 474.9 L534.2 467.5 L535.1 465.7 L536.4 476.8 L537.9 499.1 L538.8 508.8 L540.2 517.6 L542.7 514.6 L544.1 521.5 L545.6 551.8 L546.6 556.6 L548.6 551.8 L550.5 556.6 L551.9 576.2 L553.4 586.9 L555.0 577.1 L557.3 589.8 L559.3 609.4 L561.6 606.4 L563.6 619.1 L565.5 631.8 L567.1 624.0 L570.0 642.6 L572.6 640.6 L575.9 657.2 L578.2 653.3 L581.8 666.0 L583.7 664.1 L586.6 673.8 L588.6 672.9 L590.0 678.1 L591.2 681.3 L592.0 678.5 L593.5 677.7 L595.5 686.3 L597.8 684.4 L599.8 689.5 L601.7 689.5 L604.5 693.4 L606.4 691.4 L608.4 696.5 L610.3 692.6 L612.7 696.5 L615.0 693.8 L616.6 695.5 L619.3 693.6 L620.9 696.1 L622.8 694.9 L624.4 696.5 L626.3 695.5 L627.5 698.0 L630.2 697.7 L631.8 700.4 L632.6 698.4 L636.9 702.0 L638.8 704.3 L642.0 706.6 L646.3 707.4 L647.8 709.4 L650.2 708.6 L651.7 710.5 L654.1 709.4 L656.0 710.5 L658.8 710.5 L660.3 709.4 L662.3 710.5 L664.2 709.4 L668.9 709.4 L671.3 708.2 L675.2 706.6 L678.7 705.1 L683.0 703.1 L686.9 700.4 L690.0 699.2 L690.6 699.4 L700.0 690.8 L704.7 689.2 L710.9 684.5 L717.2 678.3 L718.8 678.3 L725.0 681.4 L729.7 683.8 L732.8 682.5 L737.5 682.5 L740.6 683.8 L746.9 684.5 L753.1 686.1 L759.4 687.7 L765.6 687.2 L771.9 684.5 L779.7 681.9 L787.5 678.3 L790.0 676.3 L795.0 672.5 L802.5 664.4 L810.0 656.3 L818.8 646.3 L823.8 640.0 L827.5 634.4 L829.4 635.6 L830.6 638.8 L834.4 642.5 L836.3 647.5 L838.8 650.6 L842.5 652.5 L846.3 651.3 L851.3 648.1 L861.3 641.3 L870.0 633.1 L877.5 626.9 L885.0 621.3 L895.0 610.6 L908.8 596.3 L919.1 585.3 L930.1 571.6 L941.0 560.7 L954.7 542.9 L968.4 523.8 L982.1 508.7 L993.0 491.0 L1002.6 475.9 L1020.4 448.6 L1036.8 422.6 L1053.2 396.6 L1066.9 369.2 L1077.8 350.1 L1086.5 335.0" stroke="#3c3cff" stroke-width="1" fill="none" shape-rendering="crispEdges"/>
<text x="128" y="83" font-size="11" fill="#eeeeee" font-weight="bold" text-anchor="end" >30</text>
<text x="128" y="213" font-size="11" fill="#eeeeee" font-weight="bold" text-anchor="end" >25</text>
<text x="128" y="346" font-size="11" fill="#eeeeee" font-weight="bold" text-anchor="end" >20</text>
<text x="128" y="480" font-size="11" fill="#eeeeee" font-weight="bold" text-anchor="end" >15</text>
<text x="128" y="614" font-size="11" fill="#eeeeee" font-weight="bold" text-anchor="end" >10</text>
<text x="128" y="748" font-size="11" fill="#eeeeee" font-weight="bold" text-anchor="end" >5</text>
<text x="128" y="879" font-size="11" fill="#eeeeee" font-weight="bold" text-anchor="end" >0</text>
<text x="95" y="92" font-size="11" fill="#4848ff" font-weight="bold" text-anchor="start" textLength="32" lengthAdjust="spacingAndGlyphs" >Ohms</text>
<text x="128.5" y="891" font-size="11" fill="#eeeeee" font-weight="bold" text-anchor="middle" >10</text>
<text x="216.5" y="891" font-size="11" fill="#eeeeee" font-weight="bold" text-anchor="middle" >20</text>
<text x="331.5" y="891" font-size="11" fill="#eeeeee" font-weight="bold" text-anchor="middle" >50</text>
<text x="419.5" y="891" font-size="11" fill="#eeeeee" font-weight="bold" text-anchor="middle" >100</text>
<text x="507.5" y="891" font-size="11" fill="#eeeeee" font-weight="bold" text-anchor="middle" >200</text>
<text x="623.5" y="891" font-size="11" fill="#eeeeee" font-weight="bold" text-anchor="middle" >500</text>
<text x="710.5" y="891" font-size="11" fill="#eeeeee" font-weight="bold" text-anchor="middle" >1kHz</text>
<text x="798.5" y="891" font-size="11" fill="#eeeeee" font-weight="bold" text-anchor="middle" >2k</text>
<text x="914.5" y="891" font-size="11" fill="#eeeeee" font-weight="bold" text-anchor="middle" >5k</text>
<text x="1001.5" y="891" font-size="11" fill="#eeeeee" font-weight="bold" text-anchor="middle" >10k</text>
<text x="1089.5" y="891" font-size="11" fill="#eeeeee" font-weight="bold" text-anchor="middle" >20k</text>
<text x="1093" y="83" font-size="11" fill="#eeeeee" font-weight="bold" text-anchor="start" textLength="22" lengthAdjust="spacingAndGlyphs" >180°</text>
<text x="1093" y="212" font-size="11" fill="#eeeeee" font-weight="bold" text-anchor="start" >0</text>
<text x="1102.5" y="212" font-size="11" fill="#ff3a3a" font-weight="bold" text-anchor="start" textLength="20.5" lengthAdjust="spacingAndGlyphs" >deg</text>
<text x="1093" y="346" font-size="11" fill="#eeeeee" font-weight="bold" text-anchor="start" textLength="26" lengthAdjust="spacingAndGlyphs" >-180°</text>
<text x="1026" y="95" font-size="20.5" fill="#9a9a00" font-weight="bold" text-anchor="start" textLength="55" lengthAdjust="spacingAndGlyphs" >DATS</text>
<text x="12" y="84" font-size="11" fill="#000" text-anchor="start" textLength="67" lengthAdjust="spacingAndGlyphs" >- Impedance -</text>
<rect x="5" y="93" width="83" height="1" fill="#9c9c9c" />
<rect x="5" y="93" width="1" height="37" fill="#9c9c9c" />
<rect x="5" y="129" width="83" height="1" fill="#9c9c9c" />
<rect x="87" y="93" width="1" height="37" fill="#9c9c9c" />
<rect x="6" y="94" width="83" height="1" fill="#ffffff" />
<rect x="6" y="94" width="1" height="37" fill="#ffffff" />
<rect x="5" y="130" width="84" height="1" fill="#ffffff" />
<rect x="88" y="93" width="1" height="38" fill="#ffffff" />
<rect x="11" y="87" width="66" height="10" fill="#ababab" />
<text x="13" y="98" font-size="11" fill="#000" text-anchor="start" textLength="63" lengthAdjust="spacingAndGlyphs" >Upper Z Limit</text>
<rect x="7" y="102" width="15" height="13" fill="#707070" />
<rect x="7" y="102" width="14" height="12" fill="#f0f0f0" />
<path d="M10.5 109.5 L16.5 109.5 L13.5 106.5Z" fill="#000"/>
<rect x="7" y="115" width="15" height="13" fill="#707070" />
<rect x="7" y="115" width="14" height="12" fill="#f0f0f0" />
<path d="M10.5 119.5 L16.5 119.5 L13.5 122.5Z" fill="#000"/>
<rect x="22" y="106" width="65" height="20" fill="#ffffff" />
<rect x="22" y="106" width="63" height="18" fill="#6e6e6e" />
<rect x="23" y="107" width="62" height="17" fill="#c0c0c0" />
<text x="27" y="119" font-size="11" fill="#000" text-anchor="start" textLength="41" lengthAdjust="spacingAndGlyphs" >30 Ohms</text>
<rect x="5" y="189" width="83" height="1" fill="#9c9c9c" />
<rect x="5" y="189" width="1" height="37" fill="#9c9c9c" />
<rect x="5" y="225" width="83" height="1" fill="#9c9c9c" />
<rect x="87" y="189" width="1" height="37" fill="#9c9c9c" />
<rect x="6" y="190" width="83" height="1" fill="#ffffff" />
<rect x="6" y="190" width="1" height="37" fill="#ffffff" />
<rect x="5" y="226" width="84" height="1" fill="#ffffff" />
<rect x="88" y="189" width="1" height="38" fill="#ffffff" />
<rect x="11" y="183" width="62" height="10" fill="#ababab" />
<text x="13" y="194" font-size="11" fill="#000" text-anchor="start" textLength="59" lengthAdjust="spacingAndGlyphs" >Hi Freq Limit</text>
<rect x="7" y="198" width="15" height="13" fill="#707070" />
<rect x="7" y="198" width="14" height="12" fill="#f0f0f0" />
<path d="M10.5 205.5 L16.5 205.5 L13.5 202.5Z" fill="#000"/>
<rect x="7" y="211" width="15" height="13" fill="#707070" />
<rect x="7" y="211" width="14" height="12" fill="#f0f0f0" />
<path d="M10.5 215.5 L16.5 215.5 L13.5 218.5Z" fill="#000"/>
<rect x="22" y="202" width="65" height="20" fill="#ffffff" />
<rect x="22" y="202" width="63" height="18" fill="#6e6e6e" />
<rect x="23" y="203" width="62" height="17" fill="#c0c0c0" />
<text x="27" y="215" font-size="11" fill="#000" text-anchor="start" textLength="31" lengthAdjust="spacingAndGlyphs" >20 kHz</text>
<rect x="5" y="236" width="83" height="1" fill="#9c9c9c" />
<rect x="5" y="236" width="1" height="37" fill="#9c9c9c" />
<rect x="5" y="272" width="83" height="1" fill="#9c9c9c" />
<rect x="87" y="236" width="1" height="37" fill="#9c9c9c" />
<rect x="6" y="237" width="83" height="1" fill="#ffffff" />
<rect x="6" y="237" width="1" height="37" fill="#ffffff" />
<rect x="5" y="273" width="84" height="1" fill="#ffffff" />
<rect x="88" y="236" width="1" height="38" fill="#ffffff" />
<rect x="11" y="230" width="71" height="10" fill="#ababab" />
<text x="13" y="241" font-size="11" fill="#000" text-anchor="start" textLength="68" lengthAdjust="spacingAndGlyphs" >Low Freq Limit</text>
<rect x="7" y="245" width="15" height="13" fill="#707070" />
<rect x="7" y="245" width="14" height="12" fill="#f0f0f0" />
<path d="M10.5 252.5 L16.5 252.5 L13.5 249.5Z" fill="#000"/>
<rect x="7" y="258" width="15" height="13" fill="#707070" />
<rect x="7" y="258" width="14" height="12" fill="#f0f0f0" />
<path d="M10.5 262.5 L16.5 262.5 L13.5 265.5Z" fill="#000"/>
<rect x="22" y="249" width="65" height="20" fill="#ffffff" />
<rect x="22" y="249" width="63" height="18" fill="#6e6e6e" />
<rect x="23" y="250" width="62" height="17" fill="#c0c0c0" />
<rect x="27" y="251" width="27.5" height="13" fill="#3399ff" />
<rect x="55" y="251" width="1" height="13" fill="#c87020" />
<text x="27" y="262" font-size="11" fill="#ffffff" text-anchor="start" textLength="27" lengthAdjust="spacingAndGlyphs" >10 Hz</text>
<rect x="5" y="277" width="84" height="50" fill="#ffffff" />
<rect x="5" y="277" width="83" height="49" fill="#a4a4a4" />
<rect x="6" y="278" width="82" height="48" fill="#c0c0c0" />
<text x="46.5" y="293" font-size="11" fill="#000" text-anchor="middle" textLength="39.83" lengthAdjust="spacingAndGlyphs" >Measure</text>
<text x="46.5" y="306" font-size="11" fill="#000" text-anchor="middle" textLength="35.35" lengthAdjust="spacingAndGlyphs" >Free-Air</text>
<text x="46.5" y="319" font-size="11" fill="#000" text-anchor="middle" textLength="52.19" lengthAdjust="spacingAndGlyphs" >Parameters</text>
<rect x="5" y="329" width="84" height="26" fill="#ffffff" />
<rect x="5" y="329" width="83" height="25" fill="#a4a4a4" />
<rect x="6" y="330" width="82" height="24" fill="#c0c0c0" />
<text x="46.5" y="346" font-size="11" fill="#000" text-anchor="middle" textLength="67.85" lengthAdjust="spacingAndGlyphs" >Measure V(as)</text>
<rect x="5" y="357" width="84" height="37" fill="#ffffff" />
<rect x="5" y="357" width="83" height="36" fill="#a4a4a4" />
<rect x="6" y="358" width="82" height="35" fill="#c0c0c0" />
<text x="46.5" y="373" font-size="11" fill="#000" text-anchor="middle" textLength="52.96" lengthAdjust="spacingAndGlyphs" >Impedance</text>
<text x="46.5" y="386" font-size="11" fill="#000" text-anchor="middle" textLength="31.97" lengthAdjust="spacingAndGlyphs" >Sweep</text>
<rect x="5" y="396" width="84" height="26" fill="#ffffff" />
<rect x="5" y="396" width="83" height="25" fill="#a4a4a4" />
<rect x="6" y="397" width="82" height="24" fill="#c0c0c0" />
<text x="46.5" y="413" font-size="11" fill="#000" text-anchor="middle" textLength="66.45" lengthAdjust="spacingAndGlyphs" >Rub and Buzz</text>
<rect x="5" y="424" width="84" height="24" fill="#ffffff" />
<rect x="5" y="424" width="83" height="23" fill="#a4a4a4" />
<rect x="6" y="425" width="82" height="22" fill="#c0c0c0" />
<text x="46.5" y="440" font-size="11" fill="#000" text-anchor="middle" textLength="54.76" lengthAdjust="spacingAndGlyphs" >R - Resistor</text>
<rect x="5" y="450" width="84" height="24" fill="#ffffff" />
<rect x="5" y="450" width="83" height="23" fill="#a4a4a4" />
<rect x="6" y="451" width="82" height="22" fill="#c0c0c0" />
<text x="46.5" y="466" font-size="11" fill="#000" text-anchor="middle" textLength="53.11" lengthAdjust="spacingAndGlyphs" >L - Inductor</text>
<rect x="5" y="476" width="84" height="24" fill="#ffffff" />
<rect x="5" y="476" width="83" height="23" fill="#a4a4a4" />
<rect x="6" y="477" width="82" height="22" fill="#c0c0c0" />
<text x="46.5" y="492" font-size="11" fill="#000" text-anchor="middle" textLength="61.42" lengthAdjust="spacingAndGlyphs" >C - Capacitor</text>
<text x="86.5" y="908" font-size="11" fill="#000" text-anchor="end" textLength="30" lengthAdjust="spacingAndGlyphs" >Notes:</text>
<text x="917.5" y="912" font-size="20" fill="#a8a8a8" text-anchor="start" textLength="146.5" lengthAdjust="spacingAndGlyphs" >Activer Windows</text>
<text x="917.5" y="934" font-size="14" fill="#a8a8a8" text-anchor="start" textLength="309.5" lengthAdjust="spacingAndGlyphs" >Accédez aux paramètres pour activer Windows.</text>
<text x="1155" y="84" font-size="11" fill="#000" text-anchor="start" textLength="100.6" lengthAdjust="spacingAndGlyphs" >- Driver Parameters -</text>
<rect x="1128" y="93" width="151" height="1" fill="#9c9c9c" />
<rect x="1128" y="93" width="1" height="188" fill="#9c9c9c" />
<rect x="1128" y="280" width="151" height="1" fill="#9c9c9c" />
<rect x="1278" y="93" width="1" height="188" fill="#9c9c9c" />
<rect x="1129" y="94" width="151" height="1" fill="#ffffff" />
<rect x="1129" y="94" width="1" height="188" fill="#ffffff" />
<rect x="1128" y="281" width="152" height="1" fill="#ffffff" />
<rect x="1279" y="93" width="1" height="189" fill="#ffffff" />
<rect x="1135" y="87" width="66" height="10" fill="#ababab" />
<text x="1137" y="98" font-size="11" fill="#000" text-anchor="start" textLength="63" lengthAdjust="spacingAndGlyphs" >V(as) Method</text>
<text x="1135.6" y="113" font-size="11" fill="#000" text-anchor="start" textLength="73.72" lengthAdjust="spacingAndGlyphs" >Piston Diameter</text>
<text x="1171" y="131" font-size="11" fill="#000" text-anchor="end" textLength="17.83" lengthAdjust="spacingAndGlyphs" >D =</text>
<rect x="1176" y="118" width="49" height="19" fill="#ffffff" />
<rect x="1176" y="118" width="47" height="17" fill="#6e6e6e" />
<rect x="1177" y="119" width="46" height="16" fill="#c0c0c0" />
<text x="1181" y="131" font-size="11" fill="#000" text-anchor="start" textLength="5.82" lengthAdjust="spacingAndGlyphs" >0</text>
<rect x="1230" y="120" width="39" height="16" fill="#ffffff" />
<rect x="1230" y="120" width="38" height="15" fill="#9e9e9e" />
<rect x="1231" y="121" width="37" height="14" fill="#a8a8a8" />
<text x="1231" y="131" font-size="11" fill="#000" text-anchor="start" textLength="29.23" lengthAdjust="spacingAndGlyphs" >inches</text>
<text x="1171" y="167" font-size="11" fill="#000" text-anchor="end" textLength="30.47" lengthAdjust="spacingAndGlyphs" >V(B) =</text>
<rect x="1176" y="154" width="49" height="19" fill="#ffffff" />
<rect x="1176" y="154" width="47" height="17" fill="#6e6e6e" />
<rect x="1177" y="155" width="46" height="16" fill="#c0c0c0" />
<text x="1181" y="167" font-size="11" fill="#000" text-anchor="start" textLength="5.82" lengthAdjust="spacingAndGlyphs" >0</text>
<rect x="1230" y="156" width="39" height="16" fill="#ffffff" />
<rect x="1230" y="156" width="38" height="15" fill="#9e9e9e" />
<rect x="1231" y="157" width="37" height="14" fill="#a8a8a8" />
<text x="1231" y="167" font-size="11" fill="#000" text-anchor="start" textLength="21.8" lengthAdjust="spacingAndGlyphs" >cu ft</text>
<text x="1171" y="202" font-size="11" fill="#000" text-anchor="end" textLength="17.9" lengthAdjust="spacingAndGlyphs" >M =</text>
<rect x="1176" y="189" width="49" height="19" fill="#ffffff" />
<rect x="1176" y="189" width="47" height="17" fill="#6e6e6e" />
<rect x="1177" y="190" width="46" height="16" fill="#c0c0c0" />
<text x="1181" y="202" font-size="11" fill="#000" text-anchor="start" textLength="5.82" lengthAdjust="spacingAndGlyphs" >0</text>
<text x="1231" y="202" font-size="11" fill="#000" text-anchor="start" textLength="28.1" lengthAdjust="spacingAndGlyphs" >grams</text>
<text x="1171" y="238" font-size="11" fill="#000" text-anchor="end" textLength="27.4" lengthAdjust="spacingAndGlyphs" >SPL =</text>
<rect x="1176" y="225" width="49" height="19" fill="#ffffff" />
<rect x="1176" y="225" width="47" height="17" fill="#6e6e6e" />
<rect x="1177" y="226" width="46" height="16" fill="#c0c0c0" />
<text x="1181" y="238" font-size="11" fill="#000" text-anchor="start" textLength="5.82" lengthAdjust="spacingAndGlyphs" >0</text>
<rect x="1230" y="227" width="39" height="16" fill="#ffffff" />
<rect x="1230" y="227" width="38" height="15" fill="#9e9e9e" />
<rect x="1231" y="228" width="37" height="14" fill="#a8a8a8" />
<text x="1231" y="238" font-size="11" fill="#000" text-anchor="start" textLength="32.35" lengthAdjust="spacingAndGlyphs" >1W/1m</text>
<text x="1171" y="274" font-size="11" fill="#000" text-anchor="end" textLength="39.22" lengthAdjust="spacingAndGlyphs" >M(md) =</text>
<rect x="1176" y="261" width="49" height="19" fill="#ffffff" />
<rect x="1176" y="261" width="47" height="17" fill="#6e6e6e" />
<rect x="1177" y="262" width="46" height="16" fill="#c0c0c0" />
<text x="1181" y="274" font-size="11" fill="#000" text-anchor="start" textLength="5.82" lengthAdjust="spacingAndGlyphs" >0</text>
<text x="1231" y="274" font-size="11" fill="#000" text-anchor="start" textLength="28.1" lengthAdjust="spacingAndGlyphs" >grams</text>
<circle cx="1143.5" cy="145.5" r="5.5" fill="#f4f4f4"/>
<path d="M1138.5 147.0 A5.2 5.2 0 0 1 1145.0 140.5" stroke="#8a8a8a" stroke-width="1" fill="none"/>
<circle cx="1143.5" cy="145.5" r="2" fill="#000"/>
<text x="1153.5" y="150.0" font-size="11" fill="#000" text-anchor="start" textLength="80.8" lengthAdjust="spacingAndGlyphs" >Test Box Method</text>
<circle cx="1143.5" cy="180.5" r="5.5" fill="#f4f4f4"/>
<path d="M1138.5 182.0 A5.2 5.2 0 0 1 1145.0 175.5" stroke="#8a8a8a" stroke-width="1" fill="none"/>
<text x="1153.5" y="185.0" font-size="11" fill="#000" text-anchor="start" textLength="96.57" lengthAdjust="spacingAndGlyphs" >Added Mass Method</text>
<circle cx="1143.5" cy="216.5" r="5.5" fill="#f4f4f4"/>
<path d="M1138.5 218.0 A5.2 5.2 0 0 1 1145.0 211.5" stroke="#8a8a8a" stroke-width="1" fill="none"/>
<text x="1153.5" y="221.0" font-size="11" fill="#000" text-anchor="start" textLength="100.81" lengthAdjust="spacingAndGlyphs" >Specified SPL Method</text>
<circle cx="1143.5" cy="252.5" r="5.5" fill="#f4f4f4"/>
<path d="M1138.5 254.0 A5.2 5.2 0 0 1 1145.0 247.5" stroke="#8a8a8a" stroke-width="1" fill="none"/>
<text x="1153.5" y="257.0" font-size="11" fill="#000" text-anchor="start" textLength="75.09" lengthAdjust="spacingAndGlyphs" >Specified M(md)</text>
<rect x="1128" y="288" width="151" height="1" fill="#9c9c9c" />
<rect x="1128" y="288" width="1" height="180" fill="#9c9c9c" />
<rect x="1128" y="467" width="151" height="1" fill="#9c9c9c" />
<rect x="1278" y="288" width="1" height="180" fill="#9c9c9c" />
<rect x="1129" y="289" width="151" height="1" fill="#ffffff" />
<rect x="1129" y="289" width="1" height="180" fill="#ffffff" />
<rect x="1128" y="468" width="152" height="1" fill="#ffffff" />
<rect x="1279" y="288" width="1" height="181" fill="#ffffff" />
<rect x="1134.5" y="282" width="108" height="10" fill="#ababab" />
<text x="1136.5" y="293" font-size="11" fill="#000" text-anchor="start" textLength="105" lengthAdjust="spacingAndGlyphs" >Measured Parameters</text>
<text x="1171" y="313" font-size="11" fill="#000" text-anchor="end" textLength="31.36" lengthAdjust="spacingAndGlyphs" >R(e) =</text>
<rect x="1176" y="300" width="49" height="19" fill="#ffffff" />
<rect x="1176" y="300" width="47" height="17" fill="#6e6e6e" />
<rect x="1177" y="301" width="46" height="16" fill="#ababab" />
<text x="1181" y="313" font-size="11" fill="#000" text-anchor="start" textLength="27.32" lengthAdjust="spacingAndGlyphs" >5.583</text>
<text x="1231" y="313" font-size="11" fill="#000" text-anchor="start" textLength="25.92" lengthAdjust="spacingAndGlyphs" >Ohms</text>
<text x="1171" y="334" font-size="11" fill="#000" text-anchor="end" textLength="29.62" lengthAdjust="spacingAndGlyphs" >F(s) =</text>
<rect x="1176" y="321" width="49" height="19" fill="#ffffff" />
<rect x="1176" y="321" width="47" height="17" fill="#6e6e6e" />
<rect x="1177" y="322" width="46" height="16" fill="#ababab" />
<text x="1181" y="334" font-size="11" fill="#000" text-anchor="start" textLength="27.56" lengthAdjust="spacingAndGlyphs" >208.2</text>
<text x="1231" y="334" font-size="11" fill="#000" text-anchor="start" textLength="11.89" lengthAdjust="spacingAndGlyphs" >Hz</text>
<text x="1171" y="355" font-size="11" fill="#000" text-anchor="end" textLength="35.52" lengthAdjust="spacingAndGlyphs" >Q(ts) =</text>
<rect x="1176" y="342" width="49" height="19" fill="#ffffff" />
<rect x="1176" y="342" width="47" height="17" fill="#6e6e6e" />
<rect x="1177" y="343" width="46" height="16" fill="#ababab" />
<text x="1181" y="355" font-size="11" fill="#000" text-anchor="start" textLength="33.69" lengthAdjust="spacingAndGlyphs" >0.7141</text>
<text x="1171" y="376" font-size="11" fill="#000" text-anchor="end" textLength="35.98" lengthAdjust="spacingAndGlyphs" >Q(es) =</text>
<rect x="1176" y="363" width="49" height="19" fill="#ffffff" />
<rect x="1176" y="363" width="47" height="17" fill="#6e6e6e" />
<rect x="1177" y="364" width="46" height="16" fill="#ababab" />
<text x="1181" y="376" font-size="11" fill="#000" text-anchor="start" textLength="21.95" lengthAdjust="spacingAndGlyphs" >0.98</text>
<text x="1171" y="397" font-size="11" fill="#000" text-anchor="end" textLength="39.02" lengthAdjust="spacingAndGlyphs" >Q(ms) =</text>
<rect x="1176" y="384" width="49" height="19" fill="#ffffff" />
<rect x="1176" y="384" width="47" height="17" fill="#6e6e6e" />
<rect x="1177" y="385" width="46" height="16" fill="#ababab" />
<text x="1181" y="397" font-size="11" fill="#000" text-anchor="start" textLength="27.17" lengthAdjust="spacingAndGlyphs" >2.632</text>
<text x="1171" y="418" font-size="11" fill="#000" text-anchor="end" textLength="29.65" lengthAdjust="spacingAndGlyphs" >L(e) =</text>
<rect x="1176" y="405" width="49" height="19" fill="#ffffff" />
<rect x="1176" y="405" width="47" height="17" fill="#6e6e6e" />
<rect x="1177" y="406" width="46" height="16" fill="#ababab" />
<text x="1181" y="418" font-size="11" fill="#000" text-anchor="start" textLength="27.07" lengthAdjust="spacingAndGlyphs" >0.148</text>
<rect x="1230" y="407" width="45" height="16" fill="#ffffff" />
<rect x="1230" y="407" width="44" height="15" fill="#9e9e9e" />
<rect x="1231" y="408" width="43" height="14" fill="#a8a8a8" />
<text x="1231" y="418" font-size="11" fill="#000" text-anchor="start" textLength="42.71" lengthAdjust="spacingAndGlyphs" >mH (10k)</text>
<text x="1171" y="439" font-size="11" fill="#000" text-anchor="end" textLength="38.83" lengthAdjust="spacingAndGlyphs" >M(ms) =</text>
<rect x="1176" y="426" width="49" height="19" fill="#ffffff" />
<rect x="1176" y="426" width="47" height="17" fill="#6e6e6e" />
<rect x="1177" y="427" width="46" height="16" fill="#ababab" />
<text x="1181" y="439" font-size="11" fill="#000" text-anchor="start" textLength="5.82" lengthAdjust="spacingAndGlyphs" >0</text>
<text x="1231" y="439" font-size="11" fill="#000" text-anchor="start" textLength="28.1" lengthAdjust="spacingAndGlyphs" >grams</text>
<text x="1171" y="460" font-size="11" fill="#000" text-anchor="end" textLength="35.37" lengthAdjust="spacingAndGlyphs" >V(as) =</text>
<rect x="1176" y="447" width="49" height="19" fill="#ffffff" />
<rect x="1176" y="447" width="47" height="17" fill="#6e6e6e" />
<rect x="1177" y="448" width="46" height="16" fill="#ababab" />
<text x="1181" y="460" font-size="11" fill="#000" text-anchor="start" textLength="5.82" lengthAdjust="spacingAndGlyphs" >0</text>
<rect x="1230" y="449" width="39" height="16" fill="#ffffff" />
<rect x="1230" y="449" width="38" height="15" fill="#9e9e9e" />
<rect x="1231" y="450" width="37" height="14" fill="#a8a8a8" />
<text x="1231" y="460" font-size="11" fill="#000" text-anchor="start" textLength="21.8" lengthAdjust="spacingAndGlyphs" >cu ft</text>
<rect x="1128" y="474" width="151" height="1" fill="#9c9c9c" />
<rect x="1128" y="474" width="1" height="32" fill="#9c9c9c" />
<rect x="1128" y="505" width="151" height="1" fill="#9c9c9c" />
<rect x="1278" y="474" width="1" height="32" fill="#9c9c9c" />
<rect x="1129" y="475" width="151" height="1" fill="#ffffff" />
<rect x="1129" y="475" width="1" height="32" fill="#ffffff" />
<rect x="1128" y="506" width="152" height="1" fill="#ffffff" />
<rect x="1279" y="474" width="1" height="33" fill="#ffffff" />
<rect x="1135" y="468" width="104" height="10" fill="#ababab" />
<text x="1137" y="479" font-size="11" fill="#000" text-anchor="start" textLength="101" lengthAdjust="spacingAndGlyphs" >Test Lead Resistance</text>
<text x="1171" y="500" font-size="11" fill="#000" text-anchor="end" textLength="29.48" lengthAdjust="spacingAndGlyphs" >R(t) =</text>
<rect x="1176" y="486" width="49" height="19" fill="#ffffff" />
<rect x="1176" y="486" width="47" height="17" fill="#6e6e6e" />
<rect x="1177" y="487" width="46" height="16" fill="#ababab" />
<text x="1181" y="500" font-size="11" fill="#000" text-anchor="start" textLength="5.82" lengthAdjust="spacingAndGlyphs" >0</text>
<text x="1231" y="500" font-size="11" fill="#000" text-anchor="start" textLength="25.92" lengthAdjust="spacingAndGlyphs" >Ohms</text>
<rect x="0" y="965" width="1280" height="19" fill="#bdbdbd" />
<text x="4.5" y="980" font-size="11" fill="#000" text-anchor="start" textLength="30.5" lengthAdjust="spacingAndGlyphs" >Ready</text>
<text x="1120.5" y="980" font-size="12" fill="#000" text-anchor="end" textLength="108" lengthAdjust="spacingAndGlyphs" >Showing Workbench</text>
<rect x="1173" y="967" width="1" height="16" fill="#e6e6e6" />
<rect x="1199" y="967" width="1" height="16" fill="#e6e6e6" />
<rect x="1231" y="967" width="1" height="16" fill="#e6e6e6" />
<rect x="1262" y="967" width="1" height="16" fill="#e6e6e6" />
<text x="1178.5" y="980" font-size="11" fill="#7a7a7a" text-anchor="start" textLength="19.5" lengthAdjust="spacingAndGlyphs" >CAP</text>
<text x="1204" y="980" font-size="11" fill="#000" text-anchor="start" textLength="25" lengthAdjust="spacingAndGlyphs" >NUM</text>
<text x="1236" y="980" font-size="11" fill="#7a7a7a" text-anchor="start" textLength="24" lengthAdjust="spacingAndGlyphs" >SCRL</text>
<rect x="0" y="984" width="1280" height="40" fill="#1f1f1f" />
<rect x="2" y="993" width="81" height="22" fill="#505050" />
<rect x="2" y="993" width="80" height="21" fill="#ffffff" />
<rect x="3" y="994" width="79" height="20" fill="#909090" />
<rect x="3" y="994" width="78" height="19" fill="#f0f0f0" />
<defs><radialGradient id="shg" cx="0.5" cy="0.9" r="0.8"><stop offset="0" stop-color="#2a9ad8"/><stop offset="1" stop-color="#48f4f8"/></radialGradient></defs>
<path d="M8.7 1010.5 V1007.8 Q5.3 1006.5 5.3 1003.2 Q5.5 997 13 997 Q20.5 997 20.7 1003.2 Q20.7 1006.5 17.3 1007.8 V1010.5Z" fill="url(#shg)" stroke="#f08840" stroke-width="1"/>
<path d="M6.5 1003 L8 1004 M8 999.5 L9.5 1001 M11 998 L11.8 1000 M15 998 L14.2 1000 M18 999.5 L16.5 1001 M19.5 1003 L18 1004" stroke="#f08840" stroke-width="0.8"/>
<text x="23.5" y="1008" font-size="11" fill="#000" font-weight="bold" text-anchor="start" textLength="54.5" lengthAdjust="spacingAndGlyphs" >Démarrer</text>
<path d="M101 996 H109 L111 998 H123 V1013 H101Z" fill="#f4c84a"/>
<rect x="101" y="999" width="22" height="14" fill="#ffd866" />
<path d="M105 1013 V1005.5 H119 V1013 H115.5 V1009 H108.5 V1013Z" fill="#3a8fd8"/>
<ellipse cx="159" cy="1005" rx="10" ry="8" fill="#c8dff0" transform="rotate(-20 159 1005)"/>
<circle cx="156" cy="1006" r="1.6" fill="#e03030"/><circle cx="157" cy="1000" r="1.8" fill="#50b050"/><circle cx="161" cy="998.5" r="1.8" fill="#f0b020"/><circle cx="159" cy="1007" r="1.5" fill="#303030"/>
<path d="M160 1015 L170 994" stroke="#e08a30" stroke-width="2"/>
<path d="M168 996 L171 991 L173 993Z" fill="#e0c090"/>
<rect x="201" y="992" width="18" height="24" fill="#70767c" />
<rect x="203" y="994" width="14" height="4" fill="#4cc8f0" />
<rect x="203" y="1000" width="3.5" height="3.5" fill="#d8d8d8" />
<rect x="208" y="1000" width="3.5" height="3.5" fill="#d8d8d8" />
<rect x="213" y="1000" width="3.5" height="3.5" fill="#d8d8d8" />
<rect x="203" y="1005" width="3.5" height="3.5" fill="#d8d8d8" />
<rect x="208" y="1005" width="3.5" height="3.5" fill="#d8d8d8" />
<rect x="203" y="1010" width="3.5" height="3.5" fill="#d8d8d8" />
<rect x="208" y="1010" width="3.5" height="3.5" fill="#d8d8d8" />
<rect x="213" y="1005" width="4" height="9" fill="#1c3f8c" />
<circle cx="259" cy="1003.7" r="12" fill="#db4437"/>
<path d="M259 1003.7 L269.4 997.7 A12 12 0 0 1 261.1 1015.5Z" fill="#f4c20d"/>
<path d="M259 1003.7 L261.1 1015.5 A12 12 0 0 1 248.6 997.7Z" fill="#0f9d58"/>
<circle cx="259" cy="1003.7" r="5.2" fill="#ffffff"/><circle cx="259" cy="1003.7" r="4" fill="#4285f4"/>
<rect x="297" y="993" width="22" height="21" fill="#3a64c0" />
<rect x="298" y="994" width="20" height="19" fill="#7a9ae0" />
<rect x="299" y="995" width="18" height="17" fill="#f4f6fc" />
<rect x="299" y="995" width="18" height="2" fill="#c8d4f0" />
<text x="308" y="1009.5" font-size="14" fill="#2848a8" font-weight="bold" text-anchor="middle" textLength="15" lengthAdjust="spacingAndGlyphs" font-style="italic" font-family="Liberation Serif">W</text>
<rect x="346" y="993" width="22" height="21" fill="#2a7a2a" />
<rect x="347" y="994" width="20" height="19" fill="#6ab06a" />
<rect x="348" y="995" width="18" height="17" fill="#f2faf2" />
<path d="M350 998 H355 L357.5 1002 L360 998 H365 L360.5 1004 L365 1010 H360 L357.5 1006 L355 1010 H350 L354.5 1004Z" fill="#3a9a4a"/>
<rect x="348" y="1011" width="18" height="1" fill="#c8e0c8" />
<rect x="394" y="992" width="24" height="24" fill="#3f5a74" />
<text x="406" y="1002" font-size="9" fill="#ffffff" text-anchor="middle" textLength="24" lengthAdjust="spacingAndGlyphs" >LOGO</text>
<text x="409" y="1014" font-size="12" fill="#b8c8d8" text-anchor="middle" textLength="14" lengthAdjust="spacingAndGlyphs" >V8</text>
<g transform="rotate(35 454 1003)"><rect x="442" y="998" width="24" height="10" rx="1" fill="#0c0c0c" stroke="#bbb" stroke-width="0.8"/><rect x="444" y="995.5" width="2" height="2.5" fill="#e8d020"/><rect x="444" y="1008" width="2" height="2.5" fill="#e8d020"/><rect x="448" y="995.5" width="2" height="2.5" fill="#e8d020"/><rect x="448" y="1008" width="2" height="2.5" fill="#e8d020"/><rect x="452" y="995.5" width="2" height="2.5" fill="#e8d020"/><rect x="452" y="1008" width="2" height="2.5" fill="#e8d020"/><rect x="456" y="995.5" width="2" height="2.5" fill="#e8d020"/><rect x="456" y="1008" width="2" height="2.5" fill="#e8d020"/><rect x="460" y="995.5" width="2" height="2.5" fill="#e8d020"/><rect x="460" y="1008" width="2" height="2.5" fill="#e8d020"/><circle cx="446" cy="1003" r="1.3" fill="#666"/></g>
<defs><linearGradient id="ns" x1="0" y1="0" x2="0" y2="1"><stop offset="0" stop-color="#3a3aa0"/><stop offset="0.6" stop-color="#7050a0"/><stop offset="0.8" stop-color="#d08090"/><stop offset="1" stop-color="#101018"/></linearGradient></defs>
<rect x="492" y="992" width="24" height="23" rx="3" fill="url(#ns)"/>
<path d="M492 1007 Q503 1004 516 1012 V1015 H492Z" fill="#151520"/>
<path d="M508 995 A4.5 4.5 0 1 0 512 1002 A3.5 3.5 0 1 1 508 995Z" fill="#f4f0e0"/>
<rect x="541" y="992" width="24" height="24" fill="#ffffff" />
<circle cx="553" cy="1004" r="11" fill="#b8b8b8"/>
<text x="553" y="1008" font-size="11" fill="#2030b0" font-weight="bold" text-anchor="middle" textLength="20" lengthAdjust="spacingAndGlyphs" >dsp</text>
<rect x="578" y="984" width="48" height="40" fill="#3d3d3d" />
<rect x="578" y="1022" width="48" height="2" fill="#4f9ee0" />
<rect x="590" y="992" width="24" height="24" fill="#d0d0d0" />
<rect x="591" y="993" width="22" height="22" fill="#000" />
<rect x="595" y="993" width="1" height="22" fill="#c8c8c8" />
<rect x="600" y="993" width="1" height="22" fill="#c8c8c8" />
<rect x="604" y="993" width="1" height="22" fill="#c8c8c8" />
<rect x="609" y="993" width="1" height="22" fill="#c8c8c8" />
<rect x="591" y="999" width="22" height="1" fill="#c8c8c8" />
<rect x="591" y="1004" width="22" height="1" fill="#c8c8c8" />
<rect x="591" y="1009" width="22" height="1" fill="#c8c8c8" />
<path d="M592 1009 Q596 1007 598.5 1000 Q600 996 602 1005 Q604 1010 608 1007 Q611 1004 613 998" stroke="#80d040" stroke-width="1" fill="none"/>
<circle cx="650.5" cy="1004.5" r="10.5" fill="#c8dcf0"/><circle cx="650.5" cy="1004.5" r="3" fill="#ffffff"/><circle cx="650.5" cy="1004.5" r="1.8" fill="#222"/>
<rect x="644" y="992" width="15" height="7" fill="#e040c0" />
<rect x="645" y="993" width="13" height="5" fill="#f8e0f0" />
<text x="651.5" y="998" font-size="6" fill="#000" font-weight="bold" text-anchor="middle" textLength="12" lengthAdjust="spacingAndGlyphs" >CUE</text>
<defs><linearGradient id="ffg" x1="0.2" y1="0" x2="0.5" y2="1"><stop offset="0" stop-color="#ffb020"/><stop offset="0.55" stop-color="#ff6a20"/><stop offset="1" stop-color="#f0306a"/></linearGradient></defs>
<path d="M689.5 1004 Q689.5 996 694 993.5 Q693 997.5 695.5 998.5 Q697 994 702 993 Q705 992.5 705.5 991 Q711 994 711 1002 Q711.5 1016 700 1016.5 Q689.5 1016 689.5 1004Z" fill="url(#ffg)"/>
<path d="M705.5 991 Q711 994 711 1002 Q708 996.5 703 995.5 Q706 993.5 705.5 991Z" fill="#ffd030"/>
<circle cx="699.5" cy="1005" r="5.8" fill="#7a3ad8"/>
<path d="M692 1000 Q696 997.5 702 999 Q699 1001 697 1000.5 Q694 1001 692 1000Z" fill="#ff9a30"/>
<rect x="738" y="995" width="21" height="19" fill="#6fb4e0" />
<rect x="739" y="996" width="17" height="17" fill="#4a90c8" />
<circle cx="747.5" cy="1004.5" r="6.5" fill="#f07a20"/><path d="M745 1000.5 L751.5 1004.5 L745 1008.5Z" fill="#fff"/>
<path d="M788 997 L798 992 V1016 L788 1011Z" fill="#7a2a9a"/>
<path d="M798 992 L809 997 V1011 L798 1016Z" fill="#e8782a"/>
<path d="M801 1006 L806 1001 M801 1006 L806 1010" stroke="#fff" stroke-width="1.2"/><circle cx="806" cy="1000.5" r="1.5" fill="none" stroke="#fff"/><circle cx="806" cy="1010.5" r="1.5" fill="none" stroke="#fff"/>
<path d="M791 1000 L795 999 V1009 L791 1008Z" fill="#b070c8"/>
<path d="M1031.5 1006 L1037 1000.5 L1042.5 1006" stroke="#fff" stroke-width="1.2" fill="none"/>
<rect x="1056.5" y="997.5" width="8" height="10" rx="1.5" fill="none" stroke="#fff" stroke-width="1"/><path d="M1064.5 1001 L1067 999.5 V1006 L1064.5 1004.5" fill="none" stroke="#fff"/><path d="M1057 995 H1064 M1057 1010 H1064" stroke="#aaa"/>
<rect x="1078.5" y="998.5" width="14" height="9" fill="none" stroke="#fff"/><path d="M1085.5 1008 V1011 M1081 1011.5 H1090" stroke="#fff"/><rect x="1076.5" y="997.5" width="4" height="4" fill="#1f1f1f" stroke="#fff"/>
<path d="M1100.5 1001 H1103 L1107 997.5 V1010 L1103 1006.5 H1100.5Z" fill="none" stroke="#fff"/><path d="M1109.5 1001 Q1111.5 1003.8 1109.5 1006.5 M1112 999 Q1115.5 1003.8 1112 1008.5" stroke="#fff" fill="none"/><path d="M1115 997 Q1119 1003.8 1115 1010.5" stroke="#888" fill="none"/>
<text x="1138.5" y="1008.3" font-size="12" fill="#ffffff" text-anchor="middle" textLength="21" lengthAdjust="spacingAndGlyphs" >FRA</text>
<text x="1191.5" y="999.3" font-size="12" fill="#ffffff" text-anchor="middle" textLength="27" lengthAdjust="spacingAndGlyphs" >08:37</text>
<text x="1191.5" y="1017" font-size="12" fill="#ffffff" text-anchor="middle" textLength="59" lengthAdjust="spacingAndGlyphs" >20/01/2026</text>
<path d="M1239.5 996.5 H1255.5 V1008.5 H1250 L1247.5 1011 L1245 1008.5 H1239.5Z" fill="none" stroke="#fff" stroke-width="1"/>
<rect x="1275" y="984" width="1" height="40" fill="#555" />
</svg>
</body></html>
